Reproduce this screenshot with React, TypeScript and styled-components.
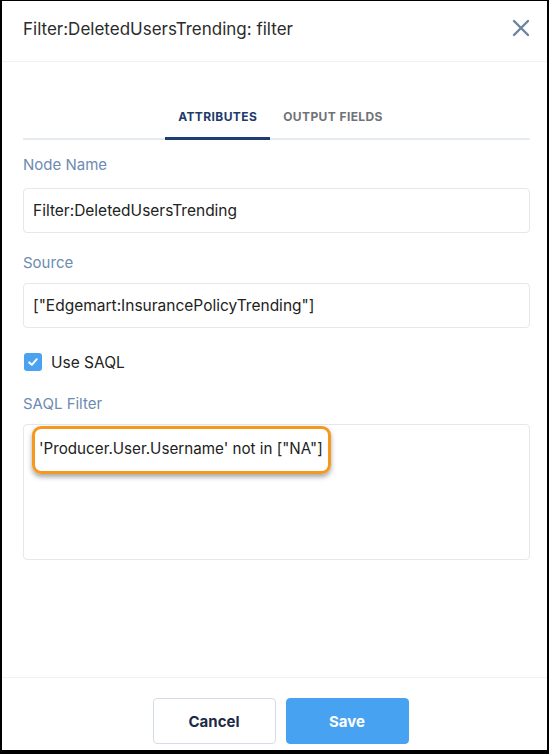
import React from "react";
import styled, { createGlobalStyle } from "styled-components";

const Global = createGlobalStyle`
  html, body { margin: 0; padding: 0; background: #000; }
  * { box-sizing: border-box; }
  body { font-family: Inter, "Open Sans", "Liberation Sans", sans-serif; }
`;

const Frame = styled.div`
  width: 549px;
  height: 754px;
  padding: 1px 2px 4px 2px;
  background: #000;
`;

const Panel = styled.div`
  height: 100%;
  background: #fff;
  display: flex;
  flex-direction: column;
`;

const Header = styled.header`
  height: 61px;
  padding: 18px 17px 0 21px;
  display: flex;
  justify-content: space-between;
  align-items: flex-start;
  border-bottom: 1px solid #eef2f7;
`;

const Title = styled.h1`
  margin: 0;
  font-size: 17px;
  line-height: 20px;
  font-weight: 400;
  color: #2b2b2b;
`;

const CloseBtn = styled.button`
  border: 0;
  background: none;
  padding: 0;
  width: 18px;
  height: 18px;
  display: flex;
  cursor: pointer;
`;

const Body = styled.main`
  flex: 1;
  padding: 0 17px 0 21px;
  display: flex;
  flex-direction: column;
`;

const TabBar = styled.div`
  margin-top: 32px;
  display: flex;
  justify-content: center;
  padding-left: 8px;
  border-bottom: 2px solid #e6ebf1;
`;

const Tab = styled.div<{ $active?: boolean }>`
  padding: 16px 13px 13px;
  margin-bottom: -2px;
  font-size: 12px;
  line-height: 14px;
  font-weight: 700;
  letter-spacing: 0.4px;
  color: ${(p) => (p.$active ? "#1d3b6b" : "#6f7378")};
  border-bottom: 3px solid ${(p) => (p.$active ? "#1f3e70" : "transparent")};
`;

const Field = styled.div<{ $top: number; $gap: number }>`
  margin-top: ${(p) => p.$top}px;
  display: flex;
  flex-direction: column;
  gap: ${(p) => p.$gap}px;
`;

const Label = styled.label`
  font-size: 15px;
  line-height: 20px;
  color: #6d8bb2;
`;

const Input = styled.div`
  height: 45px;
  border: 1px solid #e3e8ee;
  border-radius: 4px;
  padding: 0 9px;
  display: flex;
  align-items: center;
  font-size: 15.5px;
  color: #222;
`;

const TextArea = styled.div`
  position: relative;
  height: 136px;
  border: 1px solid #e3e8ee;
  border-radius: 4px;
  padding: 14px 15px;
  font-size: 15.2px;
  line-height: 20px;
  color: #222;
`;

const Highlight = styled.div`
  position: absolute;
  left: 8px;
  top: 1px;
  width: 299px;
  height: 48px;
  border: 3px solid #f5981d;
  border-radius: 9px;
  box-shadow: 0 3px 5px rgba(0, 0, 0, 0.35);
  pointer-events: none;
`;

const CheckRow = styled.div`
  margin-top: 24px;
  display: flex;
  align-items: center;
  gap: 9px;
  height: 20px;
  padding-left: 1px;
  font-size: 15.5px;
  color: #222;
`;

const Box = styled.span`
  width: 18px;
  height: 18px;
  border-radius: 3px;
  background: #4aa2f1;
  display: flex;
  align-items: center;
  justify-content: center;
`;

const Footer = styled.footer`
  height: 73px;
  border-top: 1px solid #eef2f7;
  display: flex;
  justify-content: center;
  align-items: flex-start;
  padding: 20px 0 0 12px;
  gap: 10px;
`;

const Button = styled.button<{ $primary?: boolean }>`
  width: 123px;
  height: 46px;
  border-radius: 4px;
  font-family: inherit;
  font-size: 15px;
  font-weight: 700;
  cursor: pointer;
  border: 1px solid ${(p) => (p.$primary ? "#47a2f2" : "#d3dce7")};
  background: ${(p) => (p.$primary ? "#47a2f2" : "#fff")};
  color: ${(p) => (p.$primary ? "#fff" : "#1c2b45")};
`;

export default function App() {
  return (
    <>
      <Global />
      <Frame>
        <Panel>
          <Header>
            <Title>Filter:DeletedUsersTrending: filter</Title>
            <CloseBtn aria-label="Close">
              <svg width="18" height="18" viewBox="0 0 18 18">
                <path d="M2 2 L16 16 M16 2 L2 16" stroke="#6e83a0" strokeWidth="2.4" strokeLinecap="round" />
              </svg>
            </CloseBtn>
          </Header>
          <Body>
            <TabBar>
              <Tab $active>ATTRIBUTES</Tab>
              <Tab>OUTPUT FIELDS</Tab>
            </TabBar>
            <Field $top={15} $gap={13}>
              <Label>Node Name</Label>
              <Input>Filter:DeletedUsersTrending</Input>
            </Field>
            <Field $top={20} $gap={10}>
              <Label>Source</Label>
              <Input>["Edgemart:InsurancePolicyTrending"]</Input>
            </Field>
            <CheckRow>
              <Box>
                <svg width="12" height="12" viewBox="0 0 12 12">
                  <path d="M2.2 6.4 L4.8 8.8 L9.8 3.2" fill="none" stroke="#fff" strokeWidth="2" strokeLinecap="round" strokeLinejoin="round" />
                </svg>
              </Box>
              Use SAQL
            </CheckRow>
            <Field $top={22} $gap={10}>
              <Label>SAQL Filter</Label>
              <TextArea>
                'Producer.User.Username' not in ["NA"]
                <Highlight />
              </TextArea>
            </Field>
          </Body>
          <Footer>
            <Button>Cancel</Button>
            <Button $primary>Save</Button>
          </Footer>
        </Panel>
      </Frame>
    </>
  );
}
